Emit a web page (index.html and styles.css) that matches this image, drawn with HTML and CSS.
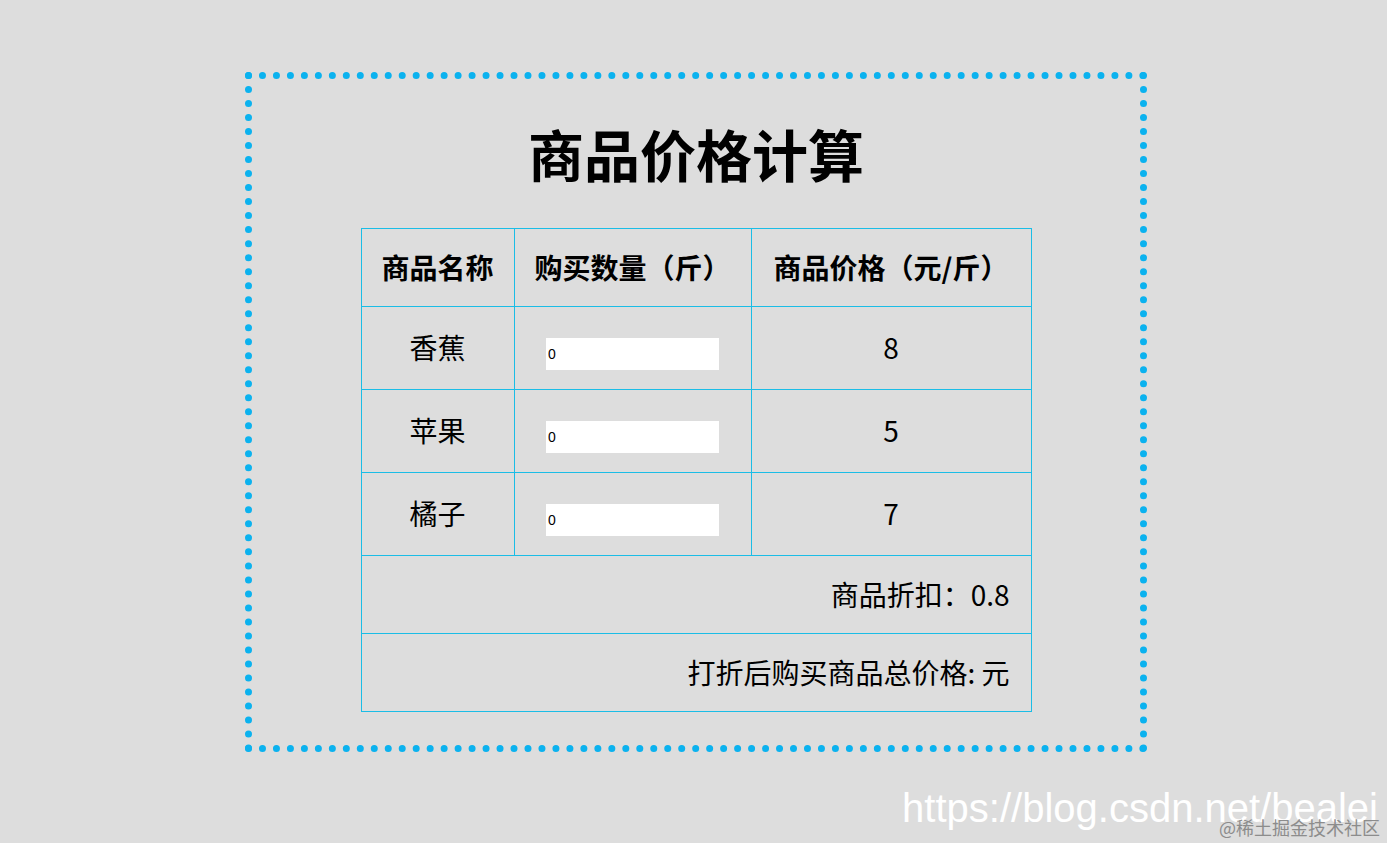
FILE: index.html
```html
<!DOCTYPE html>
<html lang="zh-CN">
<head>
<meta charset="utf-8">
<title>商品价格计算</title>
<link rel="stylesheet" href="styles.css">
</head>
<body>
<div class="page">
  <div class="box">
    <h1 class="title">商品价格计算</h1>
    <table class="price-table">
      <colgroup>
        <col class="c1"><col class="c2"><col class="c3">
      </colgroup>
      <tbody>
      <tr class="head-row">
        <th>商品名称</th>
        <th>购买数量（斤）</th>
        <th>商品价格（元/斤）</th>
      </tr>
      <tr class="item-row">
        <td>香蕉</td>
        <td><input class="qty" type="text" value="0"></td>
        <td>8</td>
      </tr>
      <tr class="item-row">
        <td>苹果</td>
        <td><input class="qty" type="text" value="0"></td>
        <td>5</td>
      </tr>
      <tr class="item-row">
        <td>橘子</td>
        <td><input class="qty" type="text" value="0"></td>
        <td>7</td>
      </tr>
      <tr class="foot-row">
        <td colspan="3">商品折扣：0.8</td>
      </tr>
      <tr class="foot-row">
        <td colspan="3">打折后购买商品总价格: 元</td>
      </tr>
      </tbody>
    </table>
  </div>
</div>
<div class="watermark">
  <span class="wm-url">https://blog.csdn.net/bealei</span>
  <span class="wm-site">@稀土掘金技术社区</span>
</div>
</body>
</html>
```
FILE: styles.css
```css
html, body {
  margin: 0;
  padding: 0;
  background: #dddddd;
  height: 100%;
  overflow: hidden;
}
body {
  font-family: "Noto Sans CJK SC", "Noto Sans", sans-serif;
  color: #000;
}
.page {
  padding: 72px 0 0 245px;
}
.box {
  width: 902px;
  height: 680px;
  box-sizing: border-box;
  border: 7px dotted #0bb2ef;
  padding-top: 40px;
}
.title {
  margin: 0;
  font-size: 56px;
  line-height: 67px;
  font-weight: 700;
  text-align: center;
}
.price-table {
  margin: 42px auto 0;
  width: 671px;
  border-collapse: separate;
  border-spacing: 0;
  table-layout: fixed;
  border-top: 1px solid #1bbde6;
  border-left: 1px solid #1bbde6;
}
.c1 { width: 153px; }
.c2 { width: 237px; }
.c3 { width: 280px; }
.price-table th,
.price-table td {
  border-right: 1px solid #1bbde6;
  border-bottom: 1px solid #1bbde6;
  padding: 0;
  text-align: center;
  vertical-align: middle;
  font-size: 28px;
  line-height: 1.2;
}
.price-table th {
  font-weight: 700;
}
.head-row { height: 78px; }
.item-row { height: 83px; }
.foot-row { height: 78px; }
.foot-row td {
  text-align: right;
  padding-right: 21px;
}
.qty {
  display: block;
  margin: 11px auto 0;
  width: 173px;
  height: 32px;
  box-sizing: border-box;
  border: none;
  outline: none;
  background: #fff;
  padding: 0 2px;
  font-family: "Liberation Sans", Arial, sans-serif;
  font-size: 14px;
  color: #000;
}
.watermark {
  position: absolute;
  right: 7px;
  bottom: 6px;
}
.wm-url {
  position: absolute;
  right: 2px;
  bottom: 6px;
  font-family: "Liberation Sans", Arial, sans-serif;
  font-size: 40px;
  color: #ffffff;
  white-space: nowrap;
}
.wm-site {
  position: relative;
  display: block;
  font-family: "Noto Sans CJK SC", sans-serif;
  font-size: 18px;
  line-height: 20px;
  color: #8c8c8c;
  white-space: nowrap;
}
```
